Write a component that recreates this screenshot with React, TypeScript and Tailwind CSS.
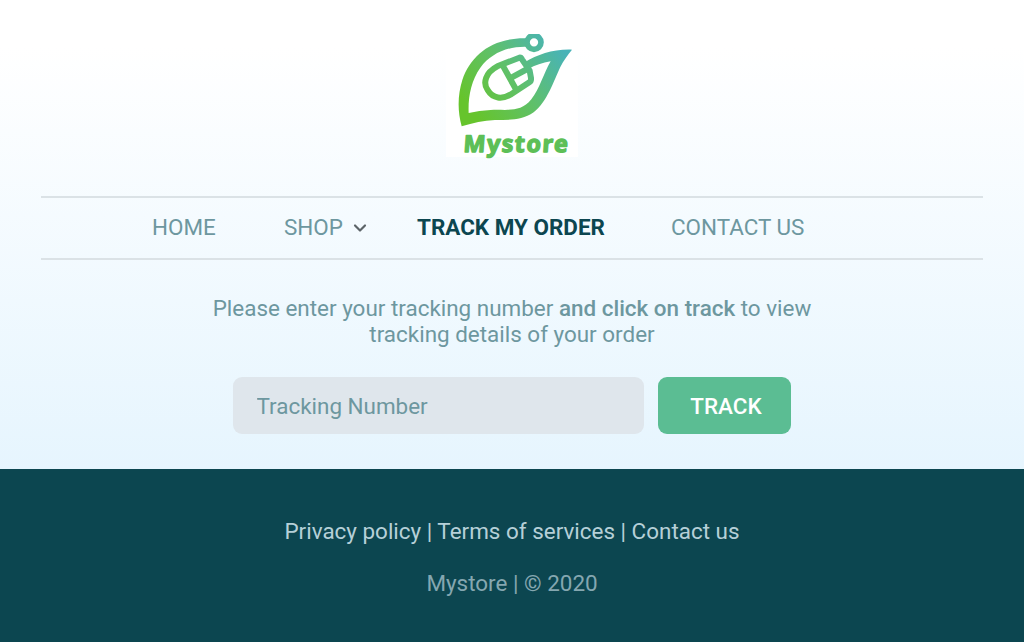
import { FiChevronDown } from "react-icons/fi";

const footerLinks = [
  { name: "Privacy policy", href: "#privacy" },
  { name: "Terms of services", href: "#terms" },
  { name: "Contact us", href: "#contact" },
];

const Logo = () => (
  <svg viewBox="18 27 396 369" className="block h-[123px] w-[132px] overflow-visible bg-white" aria-label="Mystore">
    <defs>
      <linearGradient id="leaf" gradientUnits="userSpaceOnUse" x1="90" y1="250" x2="350" y2="50">
        <stop offset="0" stopColor="#66c42c" />
        <stop offset="0.5" stopColor="#5fc06c" />
        <stop offset="1" stopColor="#48b3b8" />
      </linearGradient>
      <clipPath id="frame">
        <path d="M18 27H414V396H18Z" />
      </clipPath>
    </defs>
    {/* Leaf outline */}
    <path
      fill="url(#leaf)"
      d="M258 40C155 38 92 92 67 165C53 210 52 257 65 304C100 294 130 286 165 285C205 284 245 288 281 262C321 232 343 164 361 126C371 106 383 90 396 74C340 72 294 88 254 112L264 133C286 120 307 113 332 109C310 146 300 191 274 223C240 265 199 252 152 255C128 256 108 260 86 264C84 217 93 167 121 128C152 87 200 64 258 65Z"
    />
    <circle cx="282" cy="52" r="21" fill="#fff" stroke="url(#leaf)" strokeWidth="17" clipPath="url(#frame)" />
    {/* Mouse */}
    <g fill="none" stroke="url(#leaf)" strokeWidth="18" strokeLinejoin="round" strokeLinecap="round">
      <path d="M238 98L172 124C136 143 128 174 143 195C159 222 187 223 211 209L268 172Q274 168 273 159L269 137L246 103Q243 97 238 98Z" />
      <path d="M188 121L229 195M214 158L262 132" />
    </g>
    <text
      x="0"
      y="0"
      transform="translate(69 382) skewX(-4)"
      textLength="313"
      lengthAdjust="spacing"
      fill="#5dbf57"
      stroke="#5dbf57"
      strokeWidth="4"
      strokeLinejoin="round"
      className="font-['Noto_Sans'] text-[70px] font-bold"
    >
      Mystore
    </text>
  </svg>
);

const Navbar = () => (
  <nav className="mx-[41px] mt-[39px] flex h-16 items-center border-y-2 border-[#dbe2e6] pb-[2px] pl-[111px] text-[#6d979f]">
    <a href="#home" className="w-[132px]">HOME</a>
    <a href="#shop" className="flex w-[133px] items-center">
      SHOP
      <FiChevronDown className="mt-[2px] ml-[7px] size-5 text-[#5c6468]" strokeWidth={2.6} />
    </a>
    <a href="#track" className="w-[254px] font-bold text-[#0c4650]">TRACK MY ORDER</a>
    <a href="#contact">CONTACT US</a>
  </nav>
);

const TrackForm = () => (
  <form className="mt-[30px] flex gap-[14px]">
    <input
      type="text"
      placeholder="Tracking Number"
      className="h-[57px] w-[411px] rounded-[9px] bg-[#dfe6ec] pt-px pr-6 pl-[23.5px] outline-none placeholder:text-[#6d979f]"
    />
    <button type="button" className="h-[57px] w-[133px] rounded-[9px] bg-[#5bbd93] pl-[3px] font-medium text-white">
      TRACK
    </button>
  </form>
);

const Footer = () => (
  <footer className="flex h-[173px] flex-col items-center bg-[#0c4650] pt-[49px] text-[#b6d0d8]">
    <div>
      {footerLinks.map((link, index) => (
        <span key={link.name}>
          {index > 0 && " | "}
          <a href={link.href}>{link.name}</a>
        </span>
      ))}
    </div>
    <p className="mt-[26px] text-[#85a7b0]">Mystore | © 2020</p>
  </footer>
);

export default function App() {
  return (
    <div className="h-[642px] overflow-hidden font-['Roboto',sans-serif] text-[22.44px] leading-[26px]">
      <main className="flex h-[469px] flex-col items-center bg-linear-to-b from-white from-10% to-[#e6f5fe] pt-[34px]">
        <Logo />
        <div className="w-full">
          <Navbar />
        </div>
        <p className="mt-[35px] w-[620px] text-center text-[#6d979f]">
          Please enter your tracking number <span className="font-medium">and click on track</span> to view
          <br />
          tracking details of your order
        </p>
        <TrackForm />
      </main>
      <Footer />
    </div>
  );
}
